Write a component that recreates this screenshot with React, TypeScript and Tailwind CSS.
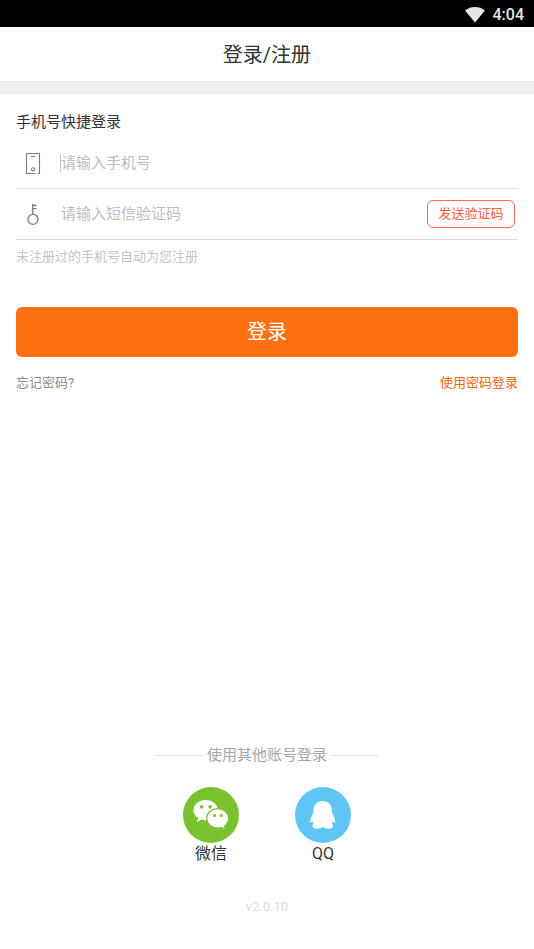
import { useState } from 'react';
import type { ReactNode } from 'react';

function WifiIcon() {
  return (
    <svg width="20" height="16" viewBox="0 0 20 16" fill="#e6e6e6" aria-hidden="true">
      <path d="M10 15.500 0 3.500C3 1.100 6.300 0 10 0S17 1.100 20 3.500Z" />
    </svg>
  );
}

function PhoneIcon() {
  return (
    <svg width="16" height="22" viewBox="0 0 16 22" fill="none" stroke="#7c7c7c" strokeWidth="1.1" aria-hidden="true">
      <path d="M10.500 21.500H1.500V1.500H14.500V21.500H12.500M6 4.500H10" />
      <circle cx="8" cy="17.300" r="1.600" />
    </svg>
  );
}

function KeyIcon() {
  return (
    <svg width="16" height="22" viewBox="0 0 16 22" fill="none" stroke="#7c7c7c" strokeWidth="1.3" aria-hidden="true">
      <circle cx="8" cy="16.300" r="5" />
      <path d="M7.700 11.300V.7M7.700 2.500H11.500M7.700 5.700H11.500" />
    </svg>
  );
}

function WechatLogo() {
  return (
    <svg width="56" height="56" viewBox="0 0 56 56" aria-hidden="true">
      <circle cx="28" cy="28" r="28" fill="#7ac130" />
      <path
        fill="#fff"
        d="M22.700 13C15.900 13 10.500 17.500 10.500 23.100c0 3.300 1.800 6.200 4.700 8l-1.300 4 4.700-2.500c1.300.4 2.700.6 4.100.6 6.800 0 12.200-4.500 12.200-10.100S29.500 13 22.700 13Z"
      />
      <path
        fill="#fff"
        stroke="#7ac130"
        strokeWidth="1.2"
        d="M34.700 21.600c-6.100 0-11 4.300-11 9.700s4.900 9.700 11 9.700c1.300 0 2.500-.2 3.700-.5l4.100 2.300-1-3.700c2.600-1.800 4.200-4.600 4.200-7.800 0-5.400-4.900-9.700-11-9.700Z"
      />
      <g fill="#7ac130">
        <circle cx="18.700" cy="19.900" r="1.800" />
        <circle cx="27.200" cy="19.900" r="1.800" />
        <circle cx="31.500" cy="28.500" r="1.500" />
        <circle cx="38.400" cy="28.500" r="1.500" />
      </g>
    </svg>
  );
}

function QQLogo() {
  return (
    <svg width="56" height="56" viewBox="0 0 56 56" aria-hidden="true">
      <circle cx="28" cy="28" r="28" fill="#5ec5f5" />
      <path
        fill="#fff"
        d="M27.700 14C22 14 18.400 18 18.300 24.500c0 1.600-.6 2.800-1.300 4.200-1.200 2.300-2 4.200-1.900 5.700.1 1.300.8 1.500 1.500.7l.9-.9c.4.8.9 1.600 1.400 2.300-1.100.8-1.500 1.600-1.400 2.600.2 1.700 1.900 2.700 4.700 2.700 2.400 0 3.800-.6 5.500-1.700 1.700 1.100 3.100 1.700 5.500 1.700 2.800 0 4.500-1 4.700-2.700.1-1-.3-1.800-1.400-2.600.5-.7 1-1.500 1.400-2.300l.9.9c.7.8 1.400.6 1.500-.7.1-1.500-.7-3.400-1.900-5.700-.7-1.400-1.300-2.600-1.300-4.200C37 18 33.400 14 27.700 14Z"
      />
    </svg>
  );
}

function SocialButton({ label, children }: { label: string; children: ReactNode }) {
  return (
    <button type="button" className="flex w-14 flex-col items-center text-base leading-[22px] text-[#333]">
      {children}
      <span>{label}</span>
    </button>
  );
}

export default function App() {
  const [phone, setPhone] = useState('');
  const [code, setCode] = useState('');

  return (
    <div className="flex min-h-screen flex-col bg-white font-[Roboto,'Noto_Sans_CJK_SC',sans-serif] text-[#333]">
      <div className="flex h-[27px] items-center justify-end gap-2 bg-black px-2.5 pt-0.5 text-base font-medium text-[#e6e6e6]">
        <WifiIcon />
        <span>4:04</span>
      </div>
      <header className="flex h-[54px] items-center justify-center pt-0.5">
        <h1 className="text-xl">登录/注册</h1>
      </header>
      <div className="h-[13px] border-t border-[#e9e9e9] bg-[#efefef]" />

      <main className="px-4 pt-4">
        <form onSubmit={(e) => e.preventDefault()}>
          <h2 className="mb-1 text-[15px] leading-6">手机号快捷登录</h2>
          <div className="flex h-[51px] items-center border-b border-[#e6e6e6] pl-[9px]">
            <label htmlFor="phone" aria-label="手机号" className="mr-[19px] shrink-0">
              <PhoneIcon />
            </label>
            <input
              id="phone"
              type="tel"
              value={phone}
              onChange={(e) => setPhone(e.target.value)}
              placeholder="请输入手机号"
              className="h-[18px] min-w-0 flex-1 border-l border-[#c4c4c4] text-[15px] outline-none placeholder:text-[#bdbdbd]"
            />
          </div>
          <div className="flex h-[51px] items-center border-b border-[#dedede] pr-[3px] pl-[9px]">
            <label htmlFor="code" aria-label="验证码" className="mr-[19px] shrink-0">
              <KeyIcon />
            </label>
            <input
              id="code"
              type="text"
              value={code}
              onChange={(e) => setCode(e.target.value)}
              placeholder="请输入短信验证码"
              className="h-[18px] min-w-0 flex-1 border-l border-transparent text-[15px] outline-none placeholder:text-[#bdbdbd]"
            />
            <button
              type="button"
              className="h-7 w-22 shrink-0 rounded-md border border-[#ff6a4d] text-[13px] leading-5 text-[#ff5a3c]"
            >
              发送验证码
            </button>
          </div>
          <p className="mt-[7px] text-[13px] leading-5 text-[#c4c4c4]">未注册过的手机号自动为您注册</p>
          <button type="submit" className="mt-10 h-[50px] w-full rounded-md bg-[#ff7010] text-xl text-white">
            登录
          </button>
          <div className="mt-4 flex justify-between text-[13px] leading-5">
            <a href="#forgot" className="text-[#8c8c8c]">
              忘记密码?
            </a>
            <a href="#password" className="text-[#f2660f]">
              使用密码登录
            </a>
          </div>
        </form>
      </main>

      <footer className="mt-auto flex flex-col items-center pt-10 pb-8">
        <div className="flex items-center gap-1 text-[15px] leading-5 text-[#a6a6a6]">
          <span className="h-px w-12 bg-[#e4e4e4]" />
          <span>使用其他账号登录</span>
          <span className="h-px w-12 bg-[#e4e4e4]" />
        </div>
        <div className="mt-[22px] flex gap-14">
          <SocialButton label="微信">
            <WechatLogo />
          </SocialButton>
          <SocialButton label="QQ">
            <QQLogo />
          </SocialButton>
        </div>
        <p className="mt-8 text-[13px] leading-5 text-[#dcdcdc]">v2.0.10</p>
      </footer>
    </div>
  );
}
